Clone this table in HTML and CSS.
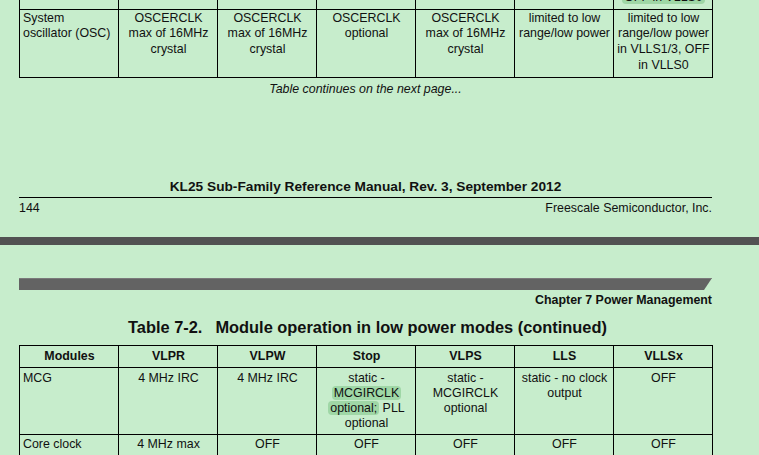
FILE: index.html
```html
<!DOCTYPE html>
<html>
<head>
<meta charset="utf-8">
<link rel="stylesheet" href="styles.css">
</head>
<body>
<div class="viewer">
  <section class="page page-end">
    <table class="grid grid-top">
      <colgroup><col><col><col><col><col><col><col></colgroup>
      <tr class="row-prev">
        <td></td><td></td><td></td><td></td><td></td><td></td>
        <td><span class="hl">OFF in VLLS0</span></td>
      </tr>
      <tr>
        <td class="name">System<br>oscillator (OSC)</td>
        <td>OSCERCLK<br>max of 16MHz<br>crystal</td>
        <td>OSCERCLK<br>max of 16MHz<br>crystal</td>
        <td>OSCERCLK<br>optional</td>
        <td>OSCERCLK<br>max of 16MHz<br>crystal</td>
        <td>limited to low<br>range/low power</td>
        <td>limited to low<br>range/low power<br>in VLLS1/3, OFF<br>in VLLS0</td>
      </tr>
    </table>
    <p class="continues">Table continues on the next page...</p>
    <footer class="page-footer">
      <div class="manual-title">KL25 Sub-Family Reference Manual, Rev. 3, September 2012</div>
      <div class="footer-row">
        <span>144</span>
        <span>Freescale Semiconductor, Inc.</span>
      </div>
    </footer>
  </section>

  <div class="page-gap"></div>

  <section class="page page-start">
    <div class="chapter-bar"></div>
    <div class="chapter-name">Chapter 7 Power Management</div>
    <h2 class="table-title"><span class="tnum">Table 7-2.</span>Module operation in low power modes (continued)</h2>
    <table class="grid grid-bottom">
      <colgroup><col><col><col><col><col><col><col></colgroup>
      <tr class="head">
        <th>Modules</th><th>VLPR</th><th>VLPW</th><th>Stop</th><th>VLPS</th><th>LLS</th><th>VLLSx</th>
      </tr>
      <tr>
        <td class="name">MCG</td>
        <td>4 MHz IRC</td>
        <td>4 MHz IRC</td>
        <td>static -<br><span class="hl">MCGIRCLK</span><br><span class="hl">optional;</span> PLL<br>optional</td>
        <td>static -<br>MCGIRCLK<br>optional</td>
        <td>static - no clock<br>output</td>
        <td>OFF</td>
      </tr>
      <tr>
        <td class="name">Core clock</td>
        <td>4 MHz max</td>
        <td>OFF</td>
        <td>OFF</td>
        <td>OFF</td>
        <td>OFF</td>
        <td>OFF</td>
      </tr>
    </table>
  </section>
</div>
</body>
</html>
```
FILE: styles.css
```css
html, body {
  margin: 0;
  padding: 0;
  background: #c7edcc;
  overflow: hidden;
}

body {
  width: 759px;
  height: 455px;
  font-family: "Liberation Sans", Arial, sans-serif;
  color: #111;
}

.viewer {
  display: flex;
  flex-direction: column;
}

.page {
  padding: 0 47px 0 19px;
}

.page-end {
  height: 237px;
  overflow: hidden;
}

.grid {
  width: 693px;
  table-layout: fixed;
  border-collapse: collapse;
  font-size: 12.4px;
}

.grid col {
  width: 99px;
}

.grid td,
.grid th {
  border: 1px solid #000;
  text-align: center;
  vertical-align: top;
  padding: 1px 2px 3px 3px;
  white-space: nowrap;
}

.grid td.name {
  text-align: left;
}

.grid-top {
  margin-top: -12px;
  line-height: 15.7px;
}

.grid-bottom {
  line-height: 15px;
}

.grid-bottom th {
  font-weight: bold;
  padding: 3px 2px 3px 3px;
}

.grid-bottom td {
  padding: 2.5px 2px 3px 3px;
}

.hl {
  background: #9fd7a6;
  border-radius: 4px;
  padding: 0 2px;
}

.continues {
  margin: 4px 0 0;
  font-size: 12.4px;
  line-height: 15px;
  font-style: italic;
  text-align: center;
}

.page-footer {
  margin-top: 82px;
}

.manual-title {
  font-size: 13.7px;
  font-weight: bold;
  line-height: 16px;
  text-align: center;
  padding-bottom: 2px;
  border-bottom: 1px solid #000;
}

.footer-row {
  display: flex;
  justify-content: space-between;
  margin-top: 3px;
  font-size: 12.4px;
  line-height: 15px;
}

.page-gap {
  height: 8px;
  background: #525252;
}

.page-start {
  padding-top: 33px;
}

.chapter-bar {
  height: 12px;
  width: 693px;
  background: #636363;
  border-top: 1px solid #7a7a7a;
  box-sizing: border-box;
  clip-path: polygon(0 0, 100% 0, calc(100% - 8px) 100%, 0 100%);
}

.chapter-name {
  margin-top: 2.5px;
  width: 693px;
  text-align: right;
  font-size: 12.4px;
  font-weight: bold;
  line-height: 15px;
}

.table-title {
  margin: 10px 0 0 109px;
  font-size: 16.4px;
  line-height: 19px;
  font-weight: bold;
  white-space: nowrap;
}

.tnum {
  margin-right: 13px;
}

.grid-bottom {
  margin-top: 8.5px;
}
```
